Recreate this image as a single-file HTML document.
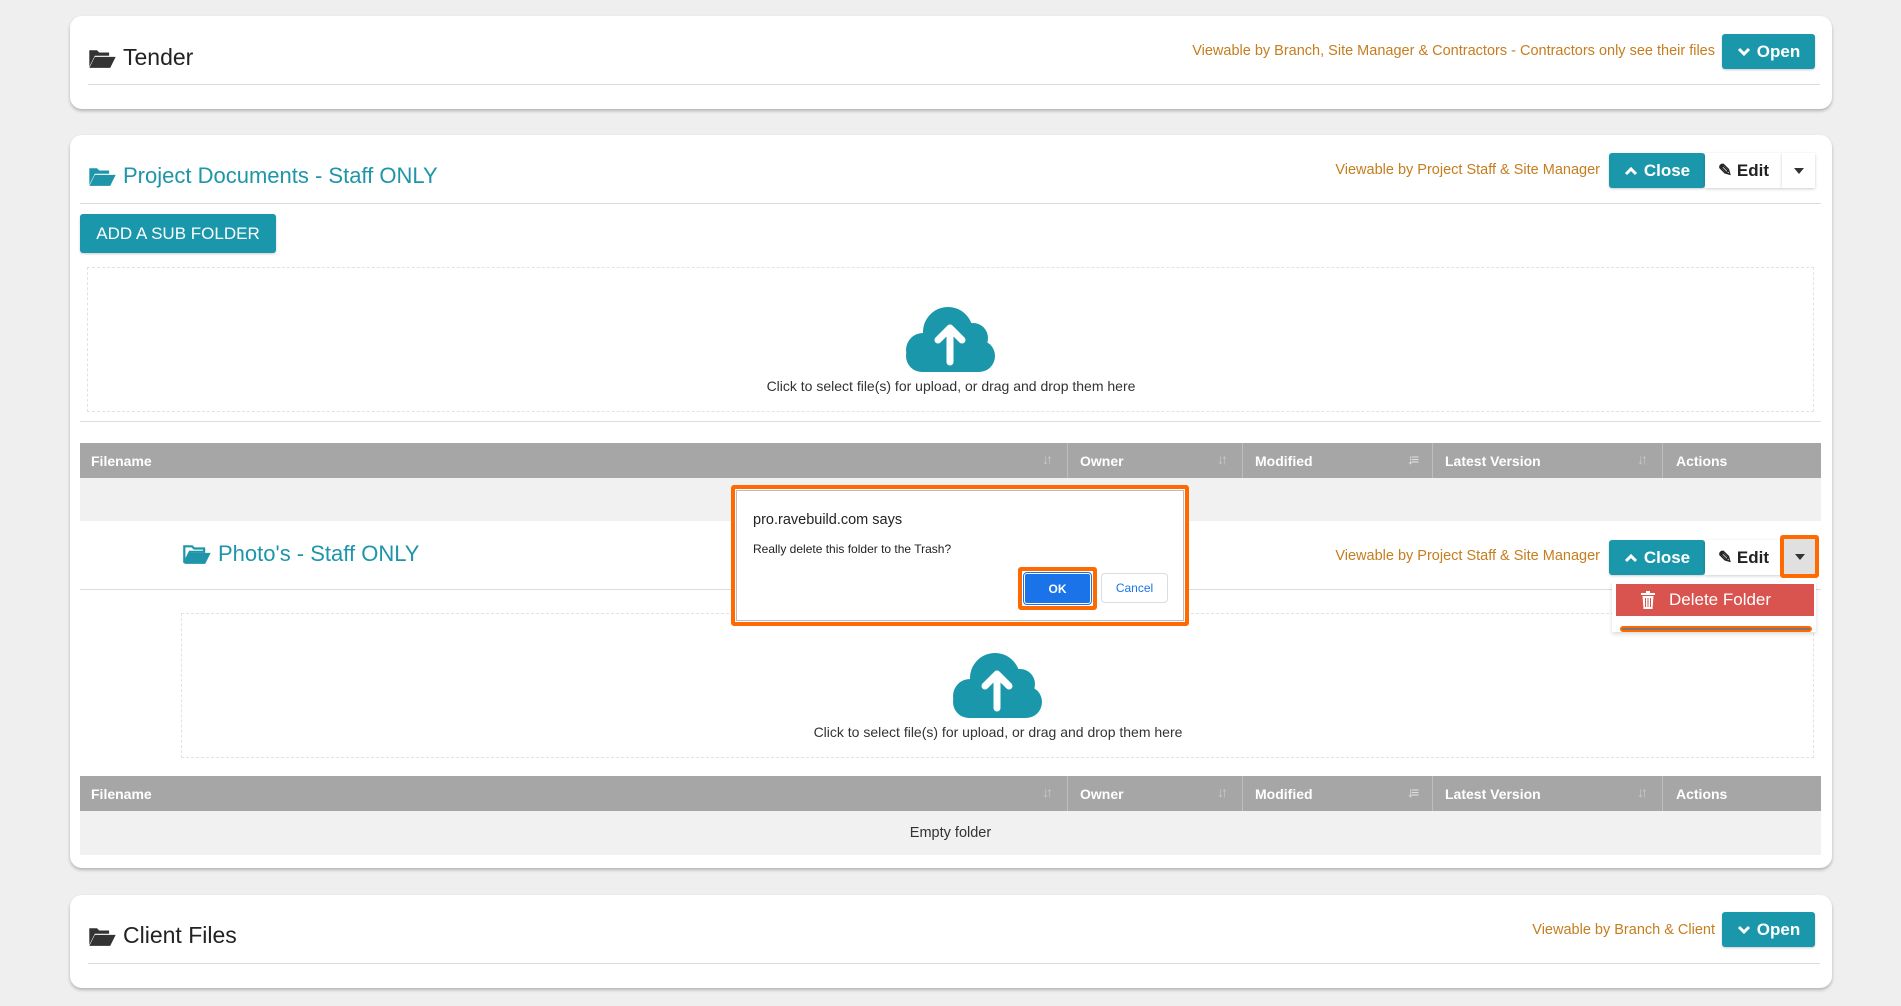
<!DOCTYPE html>
<html><head><meta charset="utf-8"><style>
*{box-sizing:border-box;margin:0;padding:0}
body{width:1901px;height:1006px;background:#efefef;font-family:"Liberation Sans",Arial,sans-serif;position:relative;overflow:hidden}
.abs{position:absolute}
.card{position:absolute;left:70px;width:1762px;background:#fff;border-radius:12px;box-shadow:0 2px 3px rgba(0,0,0,.25)}
.hr{position:absolute;height:1px;background:#dcdcdc}
.vt{position:absolute;color:#c57d1e;font-size:14.5px;white-space:nowrap}
.btn{position:absolute;color:#fff;background:#1a97ab;border-radius:3px;font-weight:bold;font-size:17px;display:flex;align-items:center;justify-content:center;gap:6px;box-shadow:0 1px 2px rgba(0,0,0,.2)}
.wbtn{position:absolute;background:#fff;color:#222;font-size:17px;font-weight:bold;display:flex;align-items:center;justify-content:center;box-shadow:0 1px 3px rgba(0,0,0,.2)}
.title{position:absolute;font-size:22px;white-space:nowrap;display:flex;align-items:center;gap:6px}
.dz{position:absolute;border:1.5px dashed #e2e2e2}
.dzt{position:absolute;font-size:14px;color:#333;white-space:nowrap;transform:translateX(-50%)}
.th{position:absolute;left:80px;width:1741px;height:35px;background:#a6a6a6;color:#fff;font-weight:bold;font-size:14px}
.th span{position:absolute;top:10px}
.th i{position:absolute;top:0;width:1px;height:35px;background:#bdbdbd}
.th b{position:absolute;top:8px;color:#c9c9c9;font-size:14px;letter-spacing:-3px}
</style></head><body>

<!-- Card 1 -->
<div class="card" style="top:16px;height:93px"></div>
<div class="title" style="left:88px;top:44px;color:#222;font-size:23px">
<svg width="29" height="22" viewBox="0 0 26 20"><path d="M1 3h7l2 2h9v3H6L1 18z" fill="#333"/><path d="M6 9h19l-5 10H1z" fill="#333"/></svg>Tender</div>
<div class="hr" style="left:88px;width:1732px;top:84px"></div>
<div class="vt" style="right:186px;top:43px">Viewable by Branch, Site Manager &amp; Contractors - Contractors only see their files</div>
<div class="btn" style="left:1722px;top:34px;width:93px;height:35px"><svg width="14" height="10" viewBox="0 0 14 10"><path d="M2 2l5 5 5-5" stroke="#fff" stroke-width="3" fill="none"/></svg>Open</div>

<!-- Card 2 -->
<div class="card" style="top:135px;height:733px"></div>
<div class="title" style="left:88px;top:163px;color:#1e95a9">
<svg width="29" height="22" viewBox="0 0 26 20"><path d="M1 3h7l2 2h9v3H6L1 18z" fill="#1e95a9"/><path d="M6 9h19l-5 10H1z" fill="#1e95a9"/></svg>Project Documents - Staff ONLY</div>
<div class="vt" style="right:301px;top:162px">Viewable by Project Staff &amp; Site Manager</div>
<div class="btn" style="left:1609px;top:153px;width:96px;height:35px"><svg width="14" height="10" viewBox="0 0 14 10"><path d="M2 8l5-5 5 5" stroke="#fff" stroke-width="3" fill="none"/></svg>Close</div>
<div class="wbtn" style="left:1705px;top:153px;width:77px;height:35px">&#9998;&nbsp;Edit</div>
<div class="wbtn" style="left:1782px;top:153px;width:33px;height:35px"><svg width="10" height="6"><path d="M0 0h10L5 6z" fill="#333"/></svg></div>
<div class="hr" style="left:80px;width:1741px;top:203px"></div>
<div class="btn" style="left:80px;top:214px;width:196px;height:39px;font-weight:normal;font-size:17px">ADD A SUB FOLDER</div>
<div class="dz" style="left:87px;top:267px;width:1727px;height:145px"></div>
<svg class="abs" style="left:903px;top:306px" width="95" height="66" viewBox="0 0 95 66"><circle cx="45" cy="26" r="25" fill="#1a97ab"/><circle cx="70" cy="32" r="15" fill="#1a97ab"/><circle cx="20" cy="44" r="17" fill="#1a97ab"/><rect x="3" y="34" width="89" height="32" rx="16" fill="#1a97ab"/><path d="M47 56V22M35 34L47 22L59 34" stroke="#fff" stroke-width="7" fill="none" stroke-linecap="round" stroke-linejoin="round"/></svg>
<div class="dzt" style="left:951px;top:378px">Click to select file(s) for upload, or drag and drop them here</div>
<div class="hr" style="left:80px;width:1741px;top:421px"></div>
<div class="th" style="top:443px"><span style="left:11px">Filename</span><b style="left:962px">&#8595;&#8593;</b><i style="left:987px"></i><span style="left:1000px">Owner</span><b style="left:1137px">&#8595;&#8593;</b><i style="left:1162px"></i><span style="left:1175px">Modified</span><b style="left:1327px;color:#e0e0e0">&#8595;&#8801;</b><i style="left:1352px"></i><span style="left:1365px">Latest Version</span><b style="left:1557px">&#8595;&#8593;</b><i style="left:1582px"></i><span style="left:1596px">Actions</span></div>
<div class="abs" style="left:80px;top:478px;width:1741px;height:43px;background:#f1f1f1"></div>

<!-- subfolder -->
<div class="title" style="left:183px;top:541px;color:#1e95a9">
<svg width="29" height="22" viewBox="0 0 26 20"><path d="M1 3h7l2 2h9v3H6L1 18z" fill="none" stroke="#1e95a9" stroke-width="2"/><path d="M6 9h19l-5 10H1z" fill="#1e95a9"/></svg>Photo's - Staff ONLY</div>
<div class="vt" style="right:301px;top:548px">Viewable by Project Staff &amp; Site Manager</div>
<div class="btn" style="left:1609px;top:540px;width:96px;height:35px"><svg width="14" height="10" viewBox="0 0 14 10"><path d="M2 8l5-5 5 5" stroke="#fff" stroke-width="3" fill="none"/></svg>Close</div>
<div class="wbtn" style="left:1705px;top:540px;width:77px;height:35px">&#9998;&nbsp;Edit</div>
<div class="abs" style="left:1780px;top:535px;width:39px;height:43px;border:4px solid #ff6a00;border-radius:3px;display:flex;align-items:center;justify-content:center;background:#e0e0e0"><svg width="10" height="6"><path d="M0 0h10L5 6z" fill="#333"/></svg></div>
<div class="hr" style="left:80px;width:1741px;top:589px"></div>
<div class="dz" style="left:181px;top:613px;width:1633px;height:145px"></div>
<div class="abs" style="left:1612px;top:582px;width:204px;height:50px;background:#fff;box-shadow:0 2px 4px rgba(0,0,0,.15)"></div>
<div class="abs" style="left:1616px;top:584px;width:198px;height:32px;background:#d9534f;color:#fff;font-size:17px;display:flex;align-items:center;padding-left:25px;gap:14px"><svg width="14" height="18" viewBox="0 0 14 18"><rect x="0" y="2" width="14" height="2" fill="#fff"/><rect x="5" y="0" width="4" height="2" fill="#fff"/><path d="M1.5 5h11l-1 13h-9z" fill="#fff"/><path d="M4.5 7v9M7 7v9M9.5 7v9" stroke="#d9534f" stroke-width="1"/></svg>Delete Folder</div>
<div class="abs" style="left:1620px;top:626px;width:192px;height:6px;border:2px solid #ff6a00;border-radius:3px;background:#777"></div>
<svg class="abs" style="left:950px;top:652px" width="95" height="66" viewBox="0 0 95 66"><circle cx="45" cy="26" r="25" fill="#1a97ab"/><circle cx="70" cy="32" r="15" fill="#1a97ab"/><circle cx="20" cy="44" r="17" fill="#1a97ab"/><rect x="3" y="34" width="89" height="32" rx="16" fill="#1a97ab"/><path d="M47 56V22M35 34L47 22L59 34" stroke="#fff" stroke-width="7" fill="none" stroke-linecap="round" stroke-linejoin="round"/></svg>
<div class="dzt" style="left:998px;top:724px">Click to select file(s) for upload, or drag and drop them here</div>
<div class="th" style="top:776px"><span style="left:11px">Filename</span><b style="left:962px">&#8595;&#8593;</b><i style="left:987px"></i><span style="left:1000px">Owner</span><b style="left:1137px">&#8595;&#8593;</b><i style="left:1162px"></i><span style="left:1175px">Modified</span><b style="left:1327px;color:#e0e0e0">&#8595;&#8801;</b><i style="left:1352px"></i><span style="left:1365px">Latest Version</span><b style="left:1557px">&#8595;&#8593;</b><i style="left:1582px"></i><span style="left:1596px">Actions</span></div>
<div class="abs" style="left:80px;top:811px;width:1741px;height:44px;background:#f1f1f1;font-size:14.5px;color:#333;text-align:center;line-height:44px">Empty folder</div>

<!-- Card 3 -->
<div class="card" style="top:895px;height:93px"></div>
<div class="title" style="left:88px;top:922px;color:#222;font-size:23px">
<svg width="29" height="22" viewBox="0 0 26 20"><path d="M1 3h7l2 2h9v3H6L1 18z" fill="#333"/><path d="M6 9h19l-5 10H1z" fill="#333"/></svg>Client Files</div>
<div class="hr" style="left:88px;width:1732px;top:963px"></div>
<div class="vt" style="right:186px;top:922px">Viewable by Branch &amp; Client</div>
<div class="btn" style="left:1722px;top:912px;width:93px;height:35px"><svg width="14" height="10" viewBox="0 0 14 10"><path d="M2 2l5 5 5-5" stroke="#fff" stroke-width="3" fill="none"/></svg>Open</div>

<!-- Dialog -->
<div class="abs" style="left:731px;top:485px;width:458px;height:141px;border:4px solid #ff6a00;border-radius:3px;background:#fff">
 <div class="abs" style="left:1px;top:1px;right:1px;bottom:1px;border:1px solid #bbb"></div>
 <div class="abs" style="left:18px;top:23px;font-size:14.5px;color:#222">pro.ravebuild.com says</div>
 <div class="abs" style="left:18px;top:53px;font-size:12px;color:#222">Really delete this folder to the Trash?</div>
 <div class="abs" style="left:283px;top:78px;width:79px;height:43px;border:4px solid #ff6a00;border-radius:3px;background:#fff;padding:2px"><div style="width:100%;height:100%;background:#1a73e8;border-radius:3px;color:#fff;font-size:12px;font-weight:bold;display:flex;align-items:center;justify-content:center;border:1px solid #fff;outline:1px solid #1a73e8">OK</div></div>
 <div class="abs" style="left:366px;top:84px;width:67px;height:30px;border:1px solid #dadce0;border-radius:4px;color:#1a73e8;font-size:12px;display:flex;align-items:center;justify-content:center">Cancel</div>
</div>
</body></html>
